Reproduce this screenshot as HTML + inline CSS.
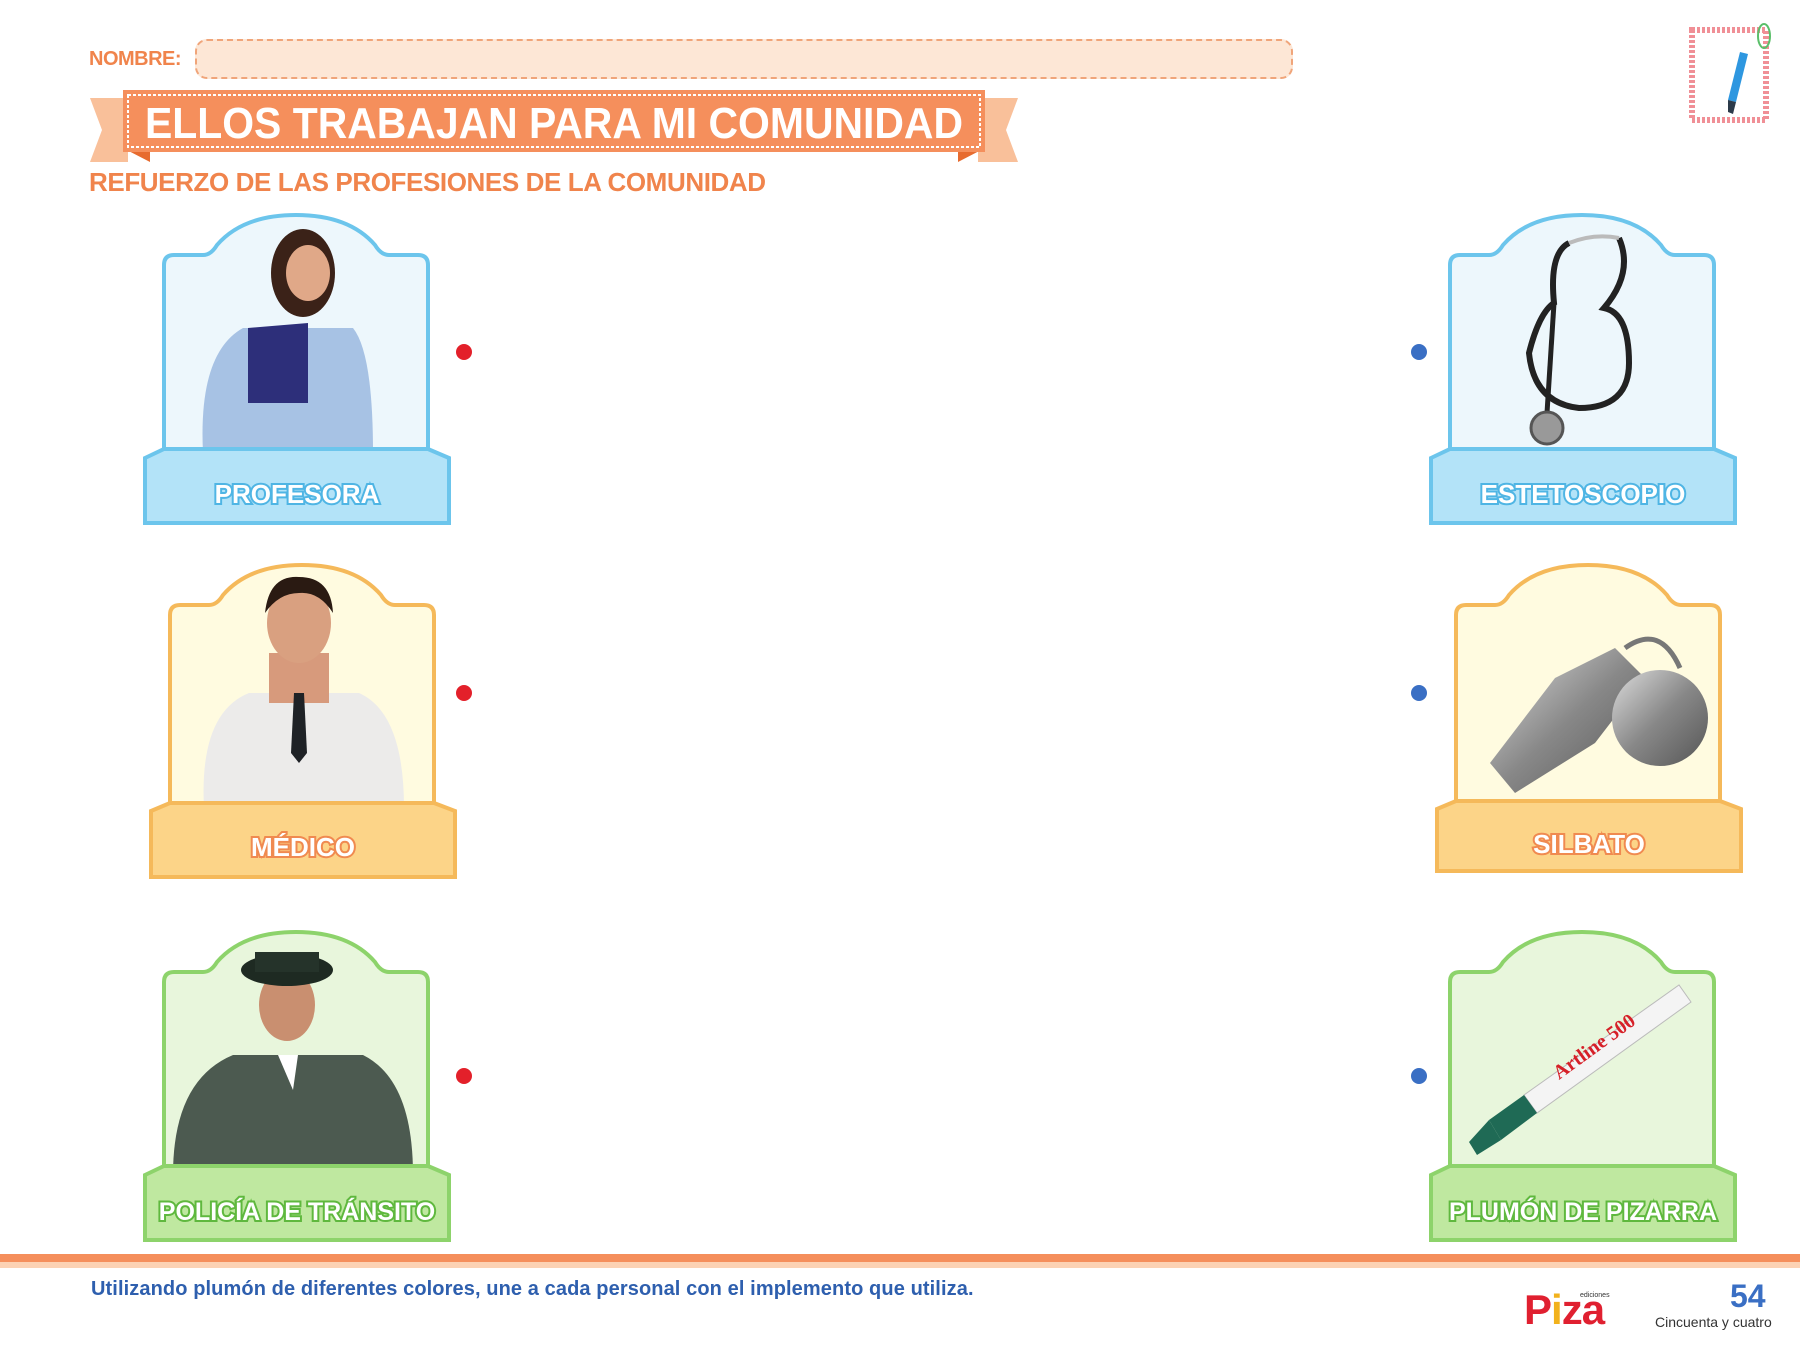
<!DOCTYPE html>
<html><head><meta charset="utf-8"><style>
html,body{margin:0;padding:0}
body{width:1800px;height:1363px;position:relative;background:#fff;font-family:"Liberation Sans",sans-serif;overflow:hidden}
.abs{position:absolute}
.dot{position:absolute;width:16px;height:16px;border-radius:50%}
.red{background:#e3202a}.blue{background:#3a6fc4}
</style></head><body>

<div class="abs" style="left:89px;top:48px;font-size:20px;color:#f0844c;font-weight:bold;letter-spacing:-0.5px">NOMBRE:</div>
<div class="abs" style="left:195px;top:39px;width:1094px;height:36px;background:#fde7d6;border:2px dashed #f0a57a;border-radius:12px"></div>

<svg class="abs" style="left:88px;top:88px" width="932" height="76" viewBox="0 0 932 76">
  <polygon points="2,10 40,10 40,74 2,74 14,42" fill="#f9c09a"/>
  <polygon points="930,10 890,10 890,74 930,74 918,42" fill="#f9c09a"/>
  <polygon points="35,60 62,60 62,74" fill="#e76b2f"/>
  <polygon points="897,60 870,60 870,74" fill="#e76b2f"/>
  <rect x="35" y="2" width="862" height="62" fill="#f58f5c"/>
  <rect x="40" y="7" width="852" height="52" fill="none" stroke="#fff" stroke-width="2" stroke-dasharray="3,2"/>
  <text x="466" y="50" text-anchor="middle" font-family="Liberation Sans" font-weight="bold" font-size="44" fill="#fff" textLength="818" lengthAdjust="spacingAndGlyphs">ELLOS TRABAJAN PARA MI COMUNIDAD</text>
</svg>

<div class="abs" style="left:89px;top:167px;font-size:26px;color:#f0844c;font-weight:bold;letter-spacing:-0.4px;width:700px;white-space:nowrap">REFUERZO DE LAS PROFESIONES DE LA COMUNIDAD</div>

<svg class="abs" style="left:1688px;top:22px" width="86" height="102" viewBox="0 0 86 102">
  <rect x="4" y="8" width="74" height="90" fill="#fff" stroke="#f08f96" stroke-width="6" stroke-dasharray="3,2"/>
  <ellipse cx="76" cy="14" rx="6" ry="12" fill="none" stroke="#5bbf6a" stroke-width="2"/>
  <polygon points="52,30 60,32 48,80 40,78" fill="#2e97e0"/>
  <polygon points="40,78 48,80 45,92 40,90" fill="#2c3a4a"/>
</svg>

<svg class="abs" style="left:143px;top:213px" width="308" height="312" viewBox="0 0 308 312">
  <path d="M21,250 L21,52 Q21,42 31,42 L60,42 Q68,42 74,32 Q100,2 153,2 Q206,2 232,32 Q238,42 246,42 L275,42 Q285,42 285,52 L285,250 Z" fill="#edf7fc" stroke="#6cc5ec" stroke-width="4"/>
  <ellipse cx="160" cy="60" rx="32" ry="44" fill="#3b2218"/>
  <ellipse cx="165" cy="60" rx="22" ry="28" fill="#e0a888"/>
  <path d="M60,240 Q55,140 100,115 L210,115 Q230,140 230,240 Z" fill="#a7c2e4"/>
  <path d="M105,115 L165,110 L165,190 L105,190 Z" fill="#2d2f7a"/>
  <polygon points="2,245 21,236 285,236 306,245 306,310 2,310" fill="#b3e3f8" stroke="#6cc5ec" stroke-width="4"/>
  <text x="154" y="290" text-anchor="middle" font-weight="bold" font-size="26" fill="#fff" stroke="#4fb5e4" stroke-width="4" paint-order="stroke" font-family="Liberation Sans">PROFESORA</text>
</svg>

<svg class="abs" style="left:149px;top:563px" width="308" height="316" viewBox="0 0 308 316">
  <path d="M21,250 L21,52 Q21,42 31,42 L60,42 Q68,42 74,32 Q100,2 153,2 Q206,2 232,32 Q238,42 246,42 L275,42 Q285,42 285,52 L285,250 Z" fill="#fffbe0" stroke="#f5b95a" stroke-width="4"/>
  <path d="M55,245 Q50,150 100,130 L210,130 Q255,150 255,245 Z" fill="#ecebea"/>
  <rect x="120" y="90" width="60" height="50" fill="#d79a7c"/>
  <ellipse cx="150" cy="60" rx="32" ry="40" fill="#d9a080"/>
  <path d="M116,50 Q120,12 150,14 Q182,14 184,50 Q170,28 150,30 Q130,30 116,50Z" fill="#2a1a12"/>
  <polygon points="145,130 155,130 158,190 150,200 142,190" fill="#1f2226"/>
  <polygon points="2,248 21,240 285,240 306,248 306,314 2,314" fill="#fcd488" stroke="#f5b95a" stroke-width="4"/>
  <text x="154" y="293" text-anchor="middle" font-weight="bold" font-size="26" fill="#fff" stroke="#f08a50" stroke-width="4" paint-order="stroke" font-family="Liberation Sans">MÉDICO</text>
</svg>

<svg class="abs" style="left:143px;top:930px" width="308" height="312" viewBox="0 0 308 312">
  <path d="M21,250 L21,52 Q21,42 31,42 L60,42 Q68,42 74,32 Q100,2 153,2 Q206,2 232,32 Q238,42 246,42 L275,42 Q285,42 285,52 L285,250 Z" fill="#e8f6dc" stroke="#8dd36b" stroke-width="4"/>
  <path d="M30,245 Q30,150 90,125 L220,125 Q270,150 270,245 Z" fill="#4c5a50"/>
  <ellipse cx="144" cy="75" rx="28" ry="36" fill="#c98f70"/>
  <ellipse cx="144" cy="40" rx="46" ry="16" fill="#1e2a22"/>
  <rect x="112" y="22" width="64" height="20" fill="#25332a"/>
  <polygon points="135,125 155,125 150,160" fill="#fff"/>
  <polygon points="2,245 21,236 285,236 306,245 306,310 2,310" fill="#bfe8a0" stroke="#8dd36b" stroke-width="4"/>
  <text x="154" y="290" text-anchor="middle" font-weight="bold" font-size="25" fill="#fff" stroke="#5fb83e" stroke-width="4" paint-order="stroke" font-family="Liberation Sans">POLICÍA DE TRÁNSITO</text>
</svg>

<svg class="abs" style="left:1429px;top:213px" width="308" height="312" viewBox="0 0 308 312">
  <path d="M21,250 L21,52 Q21,42 31,42 L60,42 Q68,42 74,32 Q100,2 153,2 Q206,2 232,32 Q238,42 246,42 L275,42 Q285,42 285,52 L285,250 Z" fill="#edf7fc" stroke="#6cc5ec" stroke-width="4"/>
  <path d="M140,30 Q120,40 125,90 Q110,100 100,140 Q105,190 150,195 Q200,195 200,150 Q200,100 175,95 Q205,60 190,25" fill="none" stroke="#222" stroke-width="6"/>
  <path d="M140,30 Q165,20 190,25" fill="none" stroke="#bbb" stroke-width="4"/>
  <line x1="125" y1="90" x2="118" y2="200" stroke="#222" stroke-width="5"/>
  <circle cx="118" cy="215" r="16" fill="#999" stroke="#555" stroke-width="3"/>
  <polygon points="2,245 21,236 285,236 306,245 306,310 2,310" fill="#b3e3f8" stroke="#6cc5ec" stroke-width="4"/>
  <text x="154" y="290" text-anchor="middle" font-weight="bold" font-size="26" fill="#fff" stroke="#4fb5e4" stroke-width="4" paint-order="stroke" font-family="Liberation Sans">ESTETOSCOPIO</text>
</svg>

<svg class="abs" style="left:1435px;top:563px" width="308" height="312" viewBox="0 0 308 312">
  <defs><linearGradient id="mg" x1="0" y1="0" x2="1" y2="1"><stop offset="0" stop-color="#ddd"/><stop offset=".5" stop-color="#888"/><stop offset="1" stop-color="#555"/></linearGradient></defs>
  <path d="M21,245 L21,52 Q21,42 31,42 L60,42 Q68,42 74,32 Q100,2 153,2 Q206,2 232,32 Q238,42 246,42 L275,42 Q285,42 285,52 L285,245 Z" fill="#fffbe0" stroke="#f5b95a" stroke-width="4"/>
  <polygon points="55,200 120,115 180,85 210,115 160,180 80,230" fill="url(#mg)"/>
  <circle cx="225" cy="155" r="48" fill="url(#mg)"/>
  <path d="M190,85 Q225,60 245,105" fill="none" stroke="#777" stroke-width="5"/>
  <polygon points="2,246 21,238 285,238 306,246 306,308 2,308" fill="#fcd488" stroke="#f5b95a" stroke-width="4"/>
  <text x="154" y="290" text-anchor="middle" font-weight="bold" font-size="26" fill="#fff" stroke="#f08a50" stroke-width="4" paint-order="stroke" font-family="Liberation Sans">SILBATO</text>
</svg>

<svg class="abs" style="left:1429px;top:930px" width="308" height="312" viewBox="0 0 308 312">
  <path d="M21,250 L21,52 Q21,42 31,42 L60,42 Q68,42 74,32 Q100,2 153,2 Q206,2 232,32 Q238,42 246,42 L275,42 Q285,42 285,52 L285,250 Z" fill="#e8f6dc" stroke="#8dd36b" stroke-width="4"/>
  <polygon points="95,165 250,55 262,72 108,183" fill="#f4f4f4" stroke="#bbb"/>
  <polygon points="60,190 95,165 108,183 72,210" fill="#1f6a55"/>
  <polygon points="40,212 60,190 72,210 48,225" fill="#1f6a55"/>
  <text x="0" y="0" transform="translate(130,150) rotate(-36)" font-weight="bold" font-size="20" fill="#d62028" font-family="Liberation Serif">Artline 500</text>
  <polygon points="2,245 21,236 285,236 306,245 306,310 2,310" fill="#bfe8a0" stroke="#8dd36b" stroke-width="4"/>
  <text x="154" y="290" text-anchor="middle" font-weight="bold" font-size="25" fill="#fff" stroke="#5fb83e" stroke-width="4" paint-order="stroke" font-family="Liberation Sans">PLUMÓN DE PIZARRA</text>
</svg>

<div class="dot red" style="left:456px;top:344px"></div>
<div class="dot red" style="left:456px;top:685px"></div>
<div class="dot red" style="left:456px;top:1068px"></div>
<div class="dot blue" style="left:1411px;top:344px"></div>
<div class="dot blue" style="left:1411px;top:685px"></div>
<div class="dot blue" style="left:1411px;top:1068px"></div>

<div class="abs" style="left:0;top:1254px;width:1800px;height:8px;background:#f58f5c"></div>
<div class="abs" style="left:0;top:1262px;width:1800px;height:6px;background:#fcd2b4"></div>

<div class="abs" style="left:91px;top:1278px;font-size:20px;color:#2e5fae;font-weight:bold;letter-spacing:0.1px">Utilizando plumón de diferentes colores, une a cada personal con el implemento que utiliza.</div>

<div class="abs" style="left:1524px;top:1288px;font-size:42px;font-weight:bold;color:#e02030;letter-spacing:-1px;line-height:44px">P<span style="color:#f2b21c">i</span>za</div>
<div class="abs" style="left:1580px;top:1292px;font-size:7px;color:#333">ediciones</div>
<div class="abs" style="left:1730px;top:1278px;font-size:32px;font-weight:bold;color:#3a6fc4">54</div>
<div class="abs" style="left:1655px;top:1314px;font-size:14px;color:#333">Cincuenta y cuatro</div>

</body></html>
